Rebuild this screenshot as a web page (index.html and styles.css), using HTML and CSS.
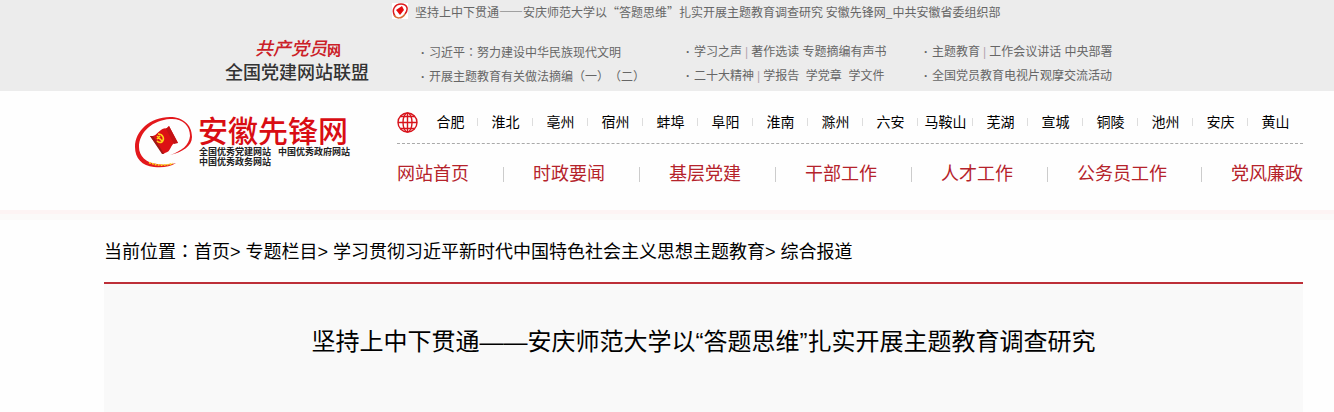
FILE: index.html
```html
<!DOCTYPE html>
<html lang="zh-CN">
<head>
<meta charset="utf-8">
<meta name="viewport" content="width=device-width, initial-scale=1">
<title>安徽先锋网</title>
<link rel="stylesheet" href="styles.css">
</head>
<body>
<div class="topbar">
  <p class="page-title">
    <svg class="page-icon" viewBox="0 0 16 16" aria-hidden="true">
      <rect width="16" height="16" fill="#fff"/>
      <path d="M3 13C-1 7 3 1 9 1c6 0 8 5 4 10" fill="none" stroke="#dc1c1e" stroke-width="1.5"/>
      <path d="M2 12c2 4 8 4 11-1" fill="none" stroke="#d96b35" stroke-width="1.5"/>
      <path d="M4 7l6-4 2 4-4 5z" fill="#e60b0e"/>
    </svg>
    <span>坚持上中下贯通——安庆师范大学以“答题思维”扎实开展主题教育调查研究 安徽先锋网_中共安徽省委组织部</span>
  </p>
  <div class="alliance">
    <a class="alliance-logo" href="#">
      <span class="alliance-brand">共产党员<b>网</b></span>
      <span class="alliance-name">全国党建网站联盟</span>
    </a>
    <ul class="alliance-links">
      <li><a href="#">习近平<span class="mid" lang="zh-TW">：</span>努力建设中华民族现代文明</a></li>
      <li><a href="#">学习之声</a><i>|</i><a href="#">著作选读</a> <a href="#">专题摘编有声书</a></li>
      <li><a href="#">主题教育</a><i>|</i><a href="#">工作会议讲话</a> <a href="#">中央部署</a></li>
      <li><a href="#">开展主题教育有关做法摘编<span class="mid" lang="zh-TW">（一）（二）</span></a></li>
      <li><a href="#">二十大精神</a><i>|</i><a href="#">学报告</a>&nbsp; <a href="#">学党章</a>&nbsp; <a href="#">学文件</a></li>
      <li><a href="#">全国党员教育电视片观摩交流活动</a></li>
    </ul>
  </div>
</div>

<header class="header">
  <div class="wrap header-row">
    <a class="logo" href="#">
      <svg class="logo-mark" viewBox="0 0 58 52" aria-hidden="true">
        <path d="M57 20C57 7 47 0 35 0 15 0 0 14 0 30c0 11 7 19 19 20 8 1 16 0 22-4-7 2-13 2-19 1C11 46 4 39 4 30 4 15 18 3 35 2c12-1 20 6 20 17-1 9-8 15-20 19 13-3 22-9 22-18z" fill="#e3181c"/>
        <path d="M14 45.500c7 3 14 3.500 24 1" fill="none" stroke="#ffd21c" stroke-width="1.600" stroke-dasharray="2 1"/>
        <path d="M15 19c5 1 7-3 11-6 3-3 5 0 8-4l9 17c-5-1-6 3-8 6-2 4-4 3-7 5z" fill="#dc1114"/>
        <path d="M15 19l12 18h2L18 19z" fill="#9e1715"/>
        <path d="M31 12l3-3 9 17-4 1z" fill="#c41214"/>
        <path d="M23 17c5 0 7 5 4 8-2 1-4 0-5-1M22 19l6 6M22 22l3-3" fill="none" stroke="#ffd51a" stroke-width="1.500"/>
      </svg>
      <span class="logo-text">
        <span class="logo-name">安徽先锋网</span>
        <span class="logo-awards">
          <span>全国优秀党建网站</span><span>中国优秀政府网站</span><span>中国优秀政务网站</span>
        </span>
      </span>
    </a>
    <div class="menus">
      <nav class="cities" aria-label="地市">
        <svg class="globe" viewBox="0 0 21 21" aria-hidden="true">
          <g fill="none" stroke="#d8141c" stroke-width="1.400">
            <circle cx="10.500" cy="10.500" r="9.500"/>
            <ellipse cx="10.500" cy="10.500" rx="4.500" ry="9.500"/>
            <path d="M1 10.500h19M10.500 1v19M3.500 4.500h14M3.500 16.500h14"/>
          </g>
        </svg>
        <ul>
          <li><a href="#">合肥</a></li><li><a href="#">淮北</a></li><li><a href="#">亳州</a></li><li><a href="#">宿州</a></li>
          <li><a href="#">蚌埠</a></li><li><a href="#">阜阳</a></li><li><a href="#">淮南</a></li><li><a href="#">滁州</a></li>
          <li><a href="#">六安</a></li><li><a href="#">马鞍山</a></li><li><a href="#">芜湖</a></li><li><a href="#">宣城</a></li>
          <li><a href="#">铜陵</a></li><li><a href="#">池州</a></li><li><a href="#">安庆</a></li><li><a href="#">黄山</a></li>
        </ul>
      </nav>
      <nav class="main-nav" aria-label="主导航">
        <ul>
          <li><a href="#">网站首页</a></li><li><a href="#">时政要闻</a></li><li><a href="#">基层党建</a></li><li><a href="#">干部工作</a></li>
          <li><a href="#">人才工作</a></li><li><a href="#">公务员工作</a></li><li><a href="#">党风廉政</a></li>
        </ul>
      </nav>
    </div>
  </div>
</header>

<main class="wrap">
  <nav class="crumbs" aria-label="当前位置">当前位置<span class="mid" lang="zh-TW">：</span><a href="#">首页</a>&gt; <a href="#">专题栏目</a>&gt; <a href="#">学习贯彻习近平新时代中国特色社会主义思想主题教育</a>&gt; <a href="#">综合报道</a></nav>
  <article class="article">
    <h1>坚持上中下贯通——安庆师范大学以“答题思维”扎实开展主题教育调查研究</h1>
  </article>
</main>
</body>
</html>
```

FILE: styles.css
```css
* { box-sizing: border-box; }

body {
  margin: 0;
  min-height: 100vh;
  display: flex;
  flex-direction: column;
  background: #fefefe;
  color: #000;
  font-family: "Liberation Sans", "Noto Sans CJK SC", sans-serif;
  text-spacing-trim: space-all;
}

a { color: inherit; text-decoration: none; }
ul { list-style: none; margin: 0; padding: 0; }
svg { display: block; flex: none; }

.wrap { margin: 0 31px 0 104px; }

/* centred full-width punctuation */
.mid { font-family: "Noto Sans CJK TC", sans-serif; }

/* Grey top bar */
.topbar {
  background: #ececec;
  color: #666;
  font-size: 12px;
  white-space: nowrap;
}

.page-title {
  display: flex;
  align-items: center;
  gap: 7px;
  margin: 0;
  padding-left: 392px;
  height: 22px;
  font-family: "Noto Sans CJK SC", sans-serif;
}

.page-icon { width: 16px; height: 16px; }

.alliance {
  display: flex;
  gap: 48px;
  padding-left: 225px;
  height: 69px;
}

.alliance-logo {
  display: flex;
  flex-direction: column;
  width: 148px;
  padding-top: 16px;
  color: #333;
}

.alliance-brand {
  padding-left: 30px;
  color: #cb2027;
  font-size: 18px;
  line-height: 22px;
  font-style: italic;
  font-weight: 500;
}

.alliance-brand b { font-size: 14px; font-style: normal; }

.alliance-name { font-size: 18px; font-weight: 500; line-height: 24px; }

.alliance-links {
  display: grid;
  grid-template-columns: 265px 238px auto;
  grid-auto-rows: 24px;
  padding-top: 18px;
  line-height: 24px;
}

.alliance-links li::before { content: "·"; display: inline-block; width: 8px; font-weight: bold; }
.alliance-links i { padding: 0 3px; color: #b5a5b0; font-style: normal; }

/* Site header */
.header {
  border-bottom: 6px solid #fbfaf9;
  box-shadow: inset 0 -4px #fdf4f4;
}

.header-row { display: flex; height: 123px; }

.logo {
  display: flex;
  flex: none;
  gap: 5px;
  width: 293px;
  padding: 26px 0 0 31px;
}

.logo-mark { width: 58px; height: 52px; }
.logo-text { display: flex; flex-direction: column; }

.logo-name {
  color: #d90d13;
  font-size: 30px;
  line-height: 30px;
  font-weight: 500;
}

.logo-awards {
  display: grid;
  grid-template-columns: 72px 72px;
  gap: 0 7px;
  padding-left: 1px;
  font-size: 9px;
  font-weight: bold;
  line-height: 10px;
  color: #222;
}

.menus { flex: 1; min-width: 0; }

.cities {
  display: flex;
  align-items: center;
  gap: 5px;
  height: 53px;
  padding-top: 10px;
  border-bottom: 1px dashed #aaa;
  font-size: 14px;
}

.globe { width: 21px; height: 21px; }
.cities ul { display: flex; flex: 1; }

.cities li {
  flex: 1 0 0;
  text-align: center;
  line-height: 20px;
  white-space: nowrap;
  background: linear-gradient(#ddd, #ddd) right center / 1px 8px no-repeat;
}

.cities li:last-child { background: none; }

.main-nav { padding-top: 16px; color: #b5232b; font-size: 18px; }
.main-nav ul { display: flex; justify-content: space-between; }
.main-nav li { display: flex; align-items: center; line-height: 28px; white-space: nowrap; }

.main-nav li + li::before {
  content: "";
  width: 1px;
  height: 15px;
  margin-right: 29px;
  background: #ccc;
}

/* Breadcrumb and article */
main { flex: 1; display: flex; flex-direction: column; }

.crumbs { padding: 16px 0; font-size: 18px; line-height: 28px; }

.article {
  flex: 1;
  padding-top: 38px;
  border-top: 2px solid #bd2f38;
  background: #f9f9f9;
}

h1 {
  margin: 0;
  text-align: center;
  font-size: 24px;
  font-weight: 400;
  line-height: 40px;
}
```
